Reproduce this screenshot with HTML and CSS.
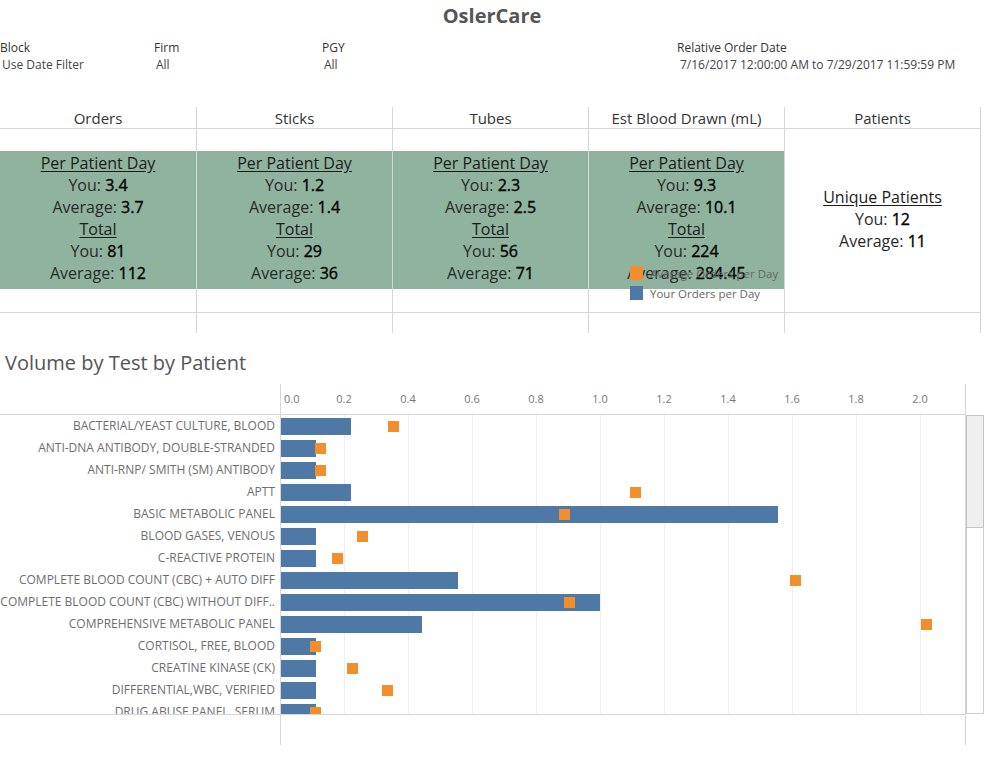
FILE: index.html
```html
<!DOCTYPE html>
<html lang="en">
<head>
<meta charset="utf-8">
<title>OslerCare</title>
<link rel="stylesheet" href="styles.css">
</head>
<body>
<header class="top">
  <h1 class="title">OslerCare</h1>
  <div class="filters">
    <div class="filter"><div class="filter-label">Block</div><div class="filter-value">Use Date Filter</div></div>
    <div class="filter"><div class="filter-label">Firm</div><div class="filter-value">All</div></div>
    <div class="filter"><div class="filter-label">PGY</div><div class="filter-value">All</div></div>
    <div class="filter filter-date"><div class="filter-label">Relative Order Date</div><div class="filter-value">7/16/2017 12:00:00 AM to 7/29/2017 11:59:59 PM</div></div>
  </div>
</header>

<section class="summary">
  <div class="col">
    <div class="col-head">Orders</div>
    <div class="gap"></div>
    <div class="card">
      <div class="card-title">Per Patient Day</div>
      <div>You: <b>3.4</b></div>
      <div>Average: <b>3.7</b></div>
      <div class="card-title">Total</div>
      <div>You: <b>81</b></div>
      <div>Average: <b>112</b></div>
    </div>
    <div class="gap gap-ruled"></div>
    <div class="tail"></div>
  </div>
  <div class="col">
    <div class="col-head">Sticks</div>
    <div class="gap"></div>
    <div class="card">
      <div class="card-title">Per Patient Day</div>
      <div>You: <b>1.2</b></div>
      <div>Average: <b>1.4</b></div>
      <div class="card-title">Total</div>
      <div>You: <b>29</b></div>
      <div>Average: <b>36</b></div>
    </div>
    <div class="gap gap-ruled"></div>
    <div class="tail"></div>
  </div>
  <div class="col">
    <div class="col-head">Tubes</div>
    <div class="gap"></div>
    <div class="card">
      <div class="card-title">Per Patient Day</div>
      <div>You: <b>2.3</b></div>
      <div>Average: <b>2.5</b></div>
      <div class="card-title">Total</div>
      <div>You: <b>56</b></div>
      <div>Average: <b>71</b></div>
    </div>
    <div class="gap gap-ruled"></div>
    <div class="tail"></div>
  </div>
  <div class="col">
    <div class="col-head">Est Blood Drawn (mL)</div>
    <div class="gap"></div>
    <div class="card">
      <div class="card-title">Per Patient Day</div>
      <div>You: <b>9.3</b></div>
      <div>Average: <b>10.1</b></div>
      <div class="card-title">Total</div>
      <div>You: <b>224</b></div>
      <div>Average: <b>284.45</b></div>
    </div>
    <div class="gap gap-ruled"></div>
    <div class="tail"></div>
  </div>
  <div class="col">
    <div class="col-head">Patients</div>
    <div class="patients">
      <div class="card-title">Unique Patients</div>
      <div>You: <b>12</b></div>
      <div>Average: <b>11</b></div>
    </div>
    <div class="tail"></div>
  </div>

  <div class="legend">
    <div class="legend-item"><span class="swatch swatch-avg"></span>Average Orders per Day</div>
    <div class="legend-item"><span class="swatch swatch-you"></span>Your Orders per Day</div>
  </div>
</section>

<section class="volume">
  <h2 class="volume-title">Volume by Test by Patient</h2>
  <div class="chart">
    <div class="chart-main">
      <div class="axis">
        <div class="axis-blank"></div>
        <div class="axis-ticks">
          <span class="tick tick-first">0.0</span>
          <span class="tick">0.2</span>
          <span class="tick">0.4</span>
          <span class="tick">0.6</span>
          <span class="tick">0.8</span>
          <span class="tick">1.0</span>
          <span class="tick">1.2</span>
          <span class="tick">1.4</span>
          <span class="tick">1.6</span>
          <span class="tick">1.8</span>
          <span class="tick">2.0</span>
        </div>
      </div>
      <div class="rows">
        <div class="row"><div class="label">BACTERIAL/YEAST CULTURE, BLOOD</div><div class="plot"><span class="bar" style="--v:0.2222"></span><span class="avg" style="--v:0.355"></span></div></div>
        <div class="row"><div class="label">ANTI-DNA ANTIBODY, DOUBLE-STRANDED</div><div class="plot"><span class="bar" style="--v:0.1111"></span><span class="avg" style="--v:0.127"></span></div></div>
        <div class="row"><div class="label">ANTI-RNP/ SMITH (SM) ANTIBODY</div><div class="plot"><span class="bar" style="--v:0.1111"></span><span class="avg" style="--v:0.127"></span></div></div>
        <div class="row"><div class="label">APTT</div><div class="plot"><span class="bar" style="--v:0.2222"></span><span class="avg" style="--v:1.111"></span></div></div>
        <div class="row"><div class="label">BASIC METABOLIC PANEL</div><div class="plot"><span class="bar" style="--v:1.5556"></span><span class="avg" style="--v:0.889"></span></div></div>
        <div class="row"><div class="label">BLOOD GASES, VENOUS</div><div class="plot"><span class="bar" style="--v:0.1111"></span><span class="avg" style="--v:0.257"></span></div></div>
        <div class="row"><div class="label">C-REACTIVE PROTEIN</div><div class="plot"><span class="bar" style="--v:0.1111"></span><span class="avg" style="--v:0.179"></span></div></div>
        <div class="row"><div class="label">COMPLETE BLOOD COUNT (CBC) + AUTO DIFF</div><div class="plot"><span class="bar" style="--v:0.5556"></span><span class="avg" style="--v:1.611"></span></div></div>
        <div class="row"><div class="label">COMPLETE BLOOD COUNT (CBC) WITHOUT DIFF..</div><div class="plot"><span class="bar" style="--v:1.0"></span><span class="avg" style="--v:0.905"></span></div></div>
        <div class="row"><div class="label">COMPREHENSIVE METABOLIC PANEL</div><div class="plot"><span class="bar" style="--v:0.4444"></span><span class="avg" style="--v:2.02"></span></div></div>
        <div class="row"><div class="label">CORTISOL, FREE, BLOOD</div><div class="plot"><span class="bar" style="--v:0.1111"></span><span class="avg" style="--v:0.111"></span></div></div>
        <div class="row"><div class="label">CREATINE KINASE (CK)</div><div class="plot"><span class="bar" style="--v:0.1111"></span><span class="avg" style="--v:0.227"></span></div></div>
        <div class="row"><div class="label">DIFFERENTIAL,WBC, VERIFIED</div><div class="plot"><span class="bar" style="--v:0.1111"></span><span class="avg" style="--v:0.336"></span></div></div>
        <div class="row"><div class="label">DRUG ABUSE PANEL, SERUM</div><div class="plot"><span class="bar" style="--v:0.1111"></span><span class="avg" style="--v:0.111"></span></div></div>
      </div>
      <div class="chart-foot">
        <div class="foot-left"></div>
        <div class="foot-plot"></div>
      </div>
    </div>
    <div class="chart-side">
      <div class="scroll-track"><div class="scroll-thumb"></div></div>
    </div>
  </div>
</section>
</body>
</html>
```

FILE: styles.css
```css
* {
  box-sizing: border-box;
}

body {
  margin: 0;
  background: #fff;
  font-family: "Open Sans", "Noto Sans", sans-serif;
  color: #333;
  width: 984px;
}

/* ---------- header ---------- */
.title {
  margin: 0;
  height: 32px;
  line-height: 32px;
  text-align: center;
  font-size: 20px;
  font-weight: 700;
  color: #555;
}

.filters {
  display: grid;
  grid-template-columns: 154px 168px 355px 1fr;
  margin-top: 8px;
  font-size: 12px;
  color: #333;
}

.filter-label {
  line-height: 16px;
}

.filter-value {
  line-height: 18px;
  padding-left: 2px;
  color: #444;
}

.filter-date .filter-value {
  padding-left: 3px;
}

/* ---------- summary table ---------- */
.summary {
  position: relative;
  display: grid;
  grid-template-columns: 197px repeat(4, 196px);
  margin-top: 33px;
}

.col {
  display: flex;
  flex-direction: column;
  border-right: 1px solid #d6d6d6;
}

.col-head {
  height: 22px;
  padding-top: 1px;
  line-height: 20px;
  text-align: center;
  font-size: 15px;
  color: #333;
  border-bottom: 1px solid #d6d6d6;
}

.gap {
  height: 22px;
}

.gap-ruled {
  height: 24px;
  border-bottom: 1px solid #d6d6d6;
}

.tail {
  height: 20px;
}

.card {
  height: 138px;
  padding-top: 1px;
  background: #8fb39e;
  text-align: center;
  font-size: 16px;
  line-height: 22px;
  color: #2a2a2a;
}

/* values read a touch heavier than their captions */
.card b,
.patients b {
  font-weight: 400;
  color: #000;
  -webkit-text-stroke: 0.35px #000;
}

.card-title {
  text-decoration: underline;
  text-underline-offset: 2px;
  color: #1c1c1c;
}

.patients {
  height: 184px;
  padding-bottom: 4px;
  display: flex;
  flex-direction: column;
  justify-content: center;
  text-align: center;
  font-size: 16px;
  line-height: 22px;
  color: #2a2a2a;
  border-bottom: 1px solid #d6d6d6;
}

/* legend floats over the table */
.legend {
  position: absolute;
  left: 630px;
  top: 156px;
  font-size: 11.5px;
  color: #666;
}

.legend-item {
  display: flex;
  align-items: center;
  height: 20px;
  white-space: nowrap;
}

.swatch {
  display: inline-block;
  width: 13px;
  height: 14px;
  margin-right: 7px;
}

.swatch-avg {
  background: #f28e2b;
}

.swatch-you {
  background: #4e79a7;
}

/* ---------- volume chart ---------- */
.volume-title {
  margin: 0;
  height: 51px;
  padding: 15px 0 0 5px;
  line-height: 30px;
  font-size: 20px;
  font-weight: 400;
  color: #555;
}

.chart {
  display: grid;
  grid-template-columns: 966px 18px;
}

.chart-main {
  display: flex;
  flex-direction: column;
}

.axis {
  display: grid;
  grid-template-columns: 281px 685px;
  height: 31px;
  border-bottom: 1px solid #d6d6d6;
}

.axis-blank {
  border-right: 1px solid #d6d6d6;
}

.axis-ticks {
  display: flex;
  border-right: 1px solid #d6d6d6;
  font-size: 11px;
  color: #777;
  line-height: 29px;
}

.tick {
  width: 64px;
  text-align: center;
}

.tick-first {
  width: 31px;
  text-align: left;
  padding-left: 3px;
}

.rows {
  height: 299px;
  overflow: hidden;
}

.row {
  display: grid;
  grid-template-columns: 281px 685px;
  height: 22px;
}

.label {
  border-right: 1px solid #d6d6d6;
  padding-right: 5px;
  text-align: right;
  font-size: 12px;
  line-height: 22px;
  color: #6e6e6e;
  white-space: nowrap;
}

.plot {
  position: relative;
  border-right: 1px solid #d6d6d6;
  background: repeating-linear-gradient(90deg, transparent 0 63px, #efefef 63px 64px);
}

.bar {
  position: absolute;
  left: 0;
  top: 3px;
  height: 17px;
  width: calc(var(--v) * 320px - 1px);
  background: #4e79a7;
}

.avg {
  position: absolute;
  top: 6px;
  left: calc(var(--v) * 320px - 6.5px);
  width: 11px;
  height: 11px;
  background: #f28e2b;
}

.chart-foot {
  display: grid;
  grid-template-columns: 281px 685px;
  height: 31px;
  border-top: 1px solid #d6d6d6;
}

.foot-left,
.foot-plot {
  border-right: 1px solid #d6d6d6;
}

.chart-side {
  padding-top: 31px;
}

.scroll-track {
  width: 18px;
  height: 299px;
  border: 1px solid #cfcfcf;
  background: #fff;
}

.scroll-thumb {
  height: 113px;
  margin: -1px -1px 0;
  background: #efefef;
  border: 1px solid #c4c4c4;
}
```
